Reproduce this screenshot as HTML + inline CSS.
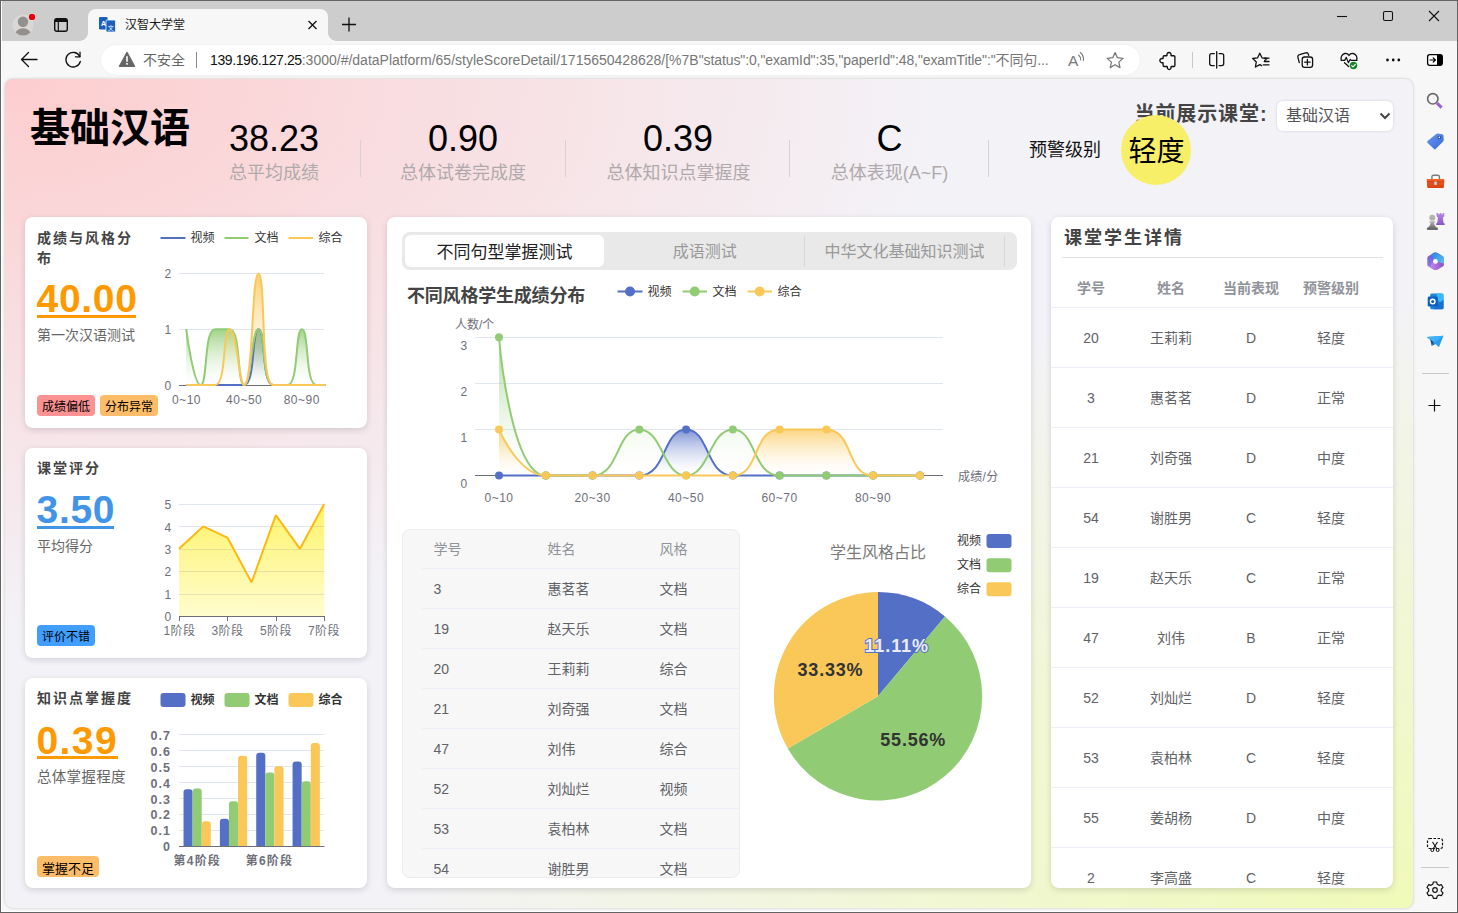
<!DOCTYPE html>
<html lang="zh-CN">
<head>
<meta charset="utf-8">
<title>汉智大学堂</title>
<style>
*{box-sizing:border-box;margin:0;padding:0}
html,body{width:1458px;height:913px;overflow:hidden;background:#f7f7f7}
body{position:relative;font-family:"Liberation Sans","Noto Sans CJK SC",sans-serif;color:#333}
.abs{position:absolute}
.t{position:absolute;white-space:nowrap;line-height:1}
.c{transform:translateX(-50%)}
#win{position:absolute;left:0;top:0;width:1458px;height:913px;border:1px solid #636363;pointer-events:none;z-index:50;box-shadow:inset 1px -1px 0 0 rgba(255,255,255,.95)}
#tabbar{position:absolute;left:1px;top:1px;width:1456px;height:40px;background:#cdcdcd}
#toolbar{position:absolute;left:1px;top:41px;width:1456px;height:38px;background:#f7f7f7}
#tab{position:absolute;left:88px;top:9px;width:240px;height:32px;background:#f7f7f7;border-radius:8px 8px 0 0}
#tab:before,#tab:after{content:"";position:absolute;bottom:0;width:8px;height:8px;background:radial-gradient(circle at 0 0,transparent 7.5px,#f7f7f7 8px)}
#tab:before{left:-8px}
#tab:after{right:-8px;background:radial-gradient(circle at 100% 0,transparent 7.5px,#f7f7f7 8px)}
#addr{position:absolute;left:101px;top:45px;width:1039px;height:30px;border-radius:15px;background:#fff;box-shadow:0 0 2px rgba(0,0,0,.08)}
#side{position:absolute;left:1413px;top:79px;width:44px;height:833px;background:#f7f7f7}
#page{position:absolute;left:5px;top:79px;width:1408px;height:829px;border-radius:8px;
 background:radial-gradient(ellipse farthest-corner at 0 0,rgba(253,205,206,1) 0%,rgba(253,205,206,0) 47%),radial-gradient(ellipse farthest-corner at 100% 100%,rgba(240,250,184,1) 0%,rgba(240,250,184,.6) 22%,rgba(240,250,184,0) 52%),#f3f2f7;box-shadow:0 0 3px rgba(0,0,0,.22)}
.card{position:absolute;background:#fff;border-radius:8px;box-shadow:0 2px 6px rgba(50,45,65,.17)}
.ttl{font-weight:bold;font-size:14px;letter-spacing:2px;color:#444}
.big{font-weight:bold;font-size:38px;letter-spacing:.9px}
.sub{font-size:14px;color:#666}
.tag{position:absolute;height:21px;border-radius:4px;font-size:12px;line-height:25px;text-align:center;color:#000;white-space:nowrap}
.ax{font-size:12px;color:#6E7079;letter-spacing:.5px}
.axb{font-size:12px;color:#6E7079;font-weight:bold;letter-spacing:1.2px}
.lg{font-size:12px;color:#333}
.num{font-size:36px;color:#000}
.lab{font-size:18px;color:#b0a9ab}
.vsep{position:absolute;top:140px;width:1px;height:37px;background:#d9d0d4}
.th{font-size:14px;color:#909399}
.td{font-size:14px;color:#606266}
.hl{position:absolute;height:1px;background:#ebeef5}
svg{position:absolute;left:0;top:0;overflow:visible}
</style>
</head>
<body>
<div id="tabbar"></div>
<div id="toolbar"></div>
<div id="tab"></div>
<div id="addr"></div>
<div id="side"></div>
<div id="page"></div>

<!-- ===== browser chrome icons & text ===== -->
<svg width="1458" height="80" viewBox="0 0 1458 80">
 <!-- profile -->
 <clipPath id="pfc"><circle cx="23" cy="25" r="10.500"/></clipPath>
 <circle cx="23" cy="25" r="10.500" fill="#dad8d6"/>
 <g clip-path="url(#pfc)">
  <ellipse cx="23" cy="35.800" rx="8.400" ry="7.600" fill="#93908e"/>
  <circle cx="23" cy="21.800" r="6.200" fill="#dad8d6"/>
  <circle cx="23" cy="21.800" r="5.200" fill="#93908e"/>
 </g>
 <circle cx="32" cy="16.900" r="3.800" fill="#e4e2e0"/>
 <circle cx="32" cy="16.900" r="3.200" fill="#e6000c"/>
 <!-- tab actions icon -->
 <rect x="54.7" y="18.7" width="12.6" height="12.6" rx="2.2" fill="none" stroke="#111" stroke-width="1.4"/>
 <path d="M54.7,22 h12.6 v-1.2 a2.2,2.2 0 0 0 -2.2,-2.2 h-8.2 a2.2,2.2 0 0 0 -2.2,2.2z" fill="#111"/>
 <line x1="58.3" y1="22" x2="58.3" y2="31" stroke="#111" stroke-width="1.2"/>
 <!-- favicon -->
 <rect x="99" y="17" width="8.600" height="12.600" rx="1.3" fill="#1b5fbd"/>
 <rect x="106" y="20" width="9.5" height="12" rx="1.2" fill="#1b5fbd" stroke="#f7f7f7" stroke-width=".8"/>
 <text x="103.5" y="25.5" font-size="7" font-weight="bold" fill="#fff" text-anchor="middle" font-family="Liberation Sans,sans-serif">A</text>
 <text x="110.8" y="29.5" font-size="6" fill="#fff" text-anchor="middle" font-family="Liberation Sans,Noto Sans CJK SC,sans-serif">文</text>
 <!-- tab close -->
 <path d="M308.5,21 l8,8 M316.5,21 l-8,8" stroke="#111" stroke-width="1.3" fill="none"/>
 <!-- new tab plus -->
 <path d="M342,24.5 h14 M349,17.5 v14" stroke="#111" stroke-width="1.3" fill="none"/>
 <!-- window controls -->
 <path d="M1337,16.5 h10" stroke="#111" stroke-width="1.1"/>
 <rect x="1383.5" y="11.500" width="9" height="9" rx="1.5" fill="none" stroke="#111" stroke-width="1.1"/>
 <path d="M1429,11 l10,10 M1439,11 l-10,10" stroke="#111" stroke-width="1.1"/>
 <!-- back -->
 <path d="M21.500,59.500 h15.500 M28.500,52.500 l-7,7 l7,7" stroke="#111" stroke-width="1.3" fill="none" stroke-linecap="round" stroke-linejoin="round"/>
 <!-- refresh -->
 <path d="M79.800,56.500 A7.300,7.300 0 1 0 80.300,61.500" stroke="#111" stroke-width="1.3" fill="none" stroke-linecap="round"/>
 <path d="M80,52.200 v4.600 h-4.600" stroke="#111" stroke-width="1.3" fill="none" stroke-linecap="round" stroke-linejoin="round"/>
 <!-- warning triangle -->
 <path d="M127,52.300 L134.600,66.300 H119.400 Z" fill="#666" stroke="#666" stroke-width="1.2" stroke-linejoin="round"/>
 <rect x="126.200" y="56.200" width="1.600" height="5.600" fill="#fff"/>
 <rect x="126.200" y="63" width="1.600" height="1.700" fill="#fff"/>
 <line x1="196.500" y1="52" x2="196.500" y2="68" stroke="#8a8a8a" stroke-width="1"/>
 <!-- read aloud A -->
 <text x="1068" y="65.500" font-size="15.500" fill="#7a7a7a" font-family="Liberation Sans,sans-serif">A</text>
 <path d="M1078.600,55 q2.300,2 2,5 M1080.400,52.500 q3.600,3.200 3,8" stroke="#7a7a7a" stroke-width="1.100" fill="none" stroke-linecap="round"/>
 <!-- star -->
 <path d="M1115.10,52.60 L1117.39,57.74 L1122.99,58.34 L1118.81,62.11 L1119.98,67.61 L1115.10,64.80 L1110.22,67.61 L1111.39,62.11 L1107.21,58.34 L1112.81,57.74Z" fill="none" stroke="#767676" stroke-width="1.250" stroke-linejoin="round"/>
 <!-- extension puzzle -->
 <path d="M1164.300,55.700 h2.300 c.3,0 .5,-.2 .4,-.5 a2.100,2.100 0 1 1 4,0 c-.1,.3 .1,.5 .4,.5 h2.300 a1.200,1.200 0 0 1 1.200,1.200 v8.400 a1.200,1.200 0 0 1 -1.200,1.200 h-2.300 c-.3,0 -.5,.2 -.4,.5 a1.900,1.900 0 1 1 -3.600,0 c.1,-.3 -.1,-.5 -.4,-.5 h-2.700 a1.200,1.200 0 0 1 -1.200,-1.200 v-2.300 c0,-.3 -.2,-.5 -.5,-.4 a2.100,2.100 0 1 1 0,-4 c.3,.1 .5,-.1 .5,-.4 v-1.300 a1.200,1.200 0 0 1 1.200,-1.200z" fill="none" stroke="#111" stroke-width="1.350" stroke-linejoin="round"/>
 <line x1="1192.500" y1="52" x2="1192.500" y2="68" stroke="#c8c8c8" stroke-width="1"/>
 <!-- split screen -->
 <path d="M1214.300,53.600 h-2.600 a2,2 0 0 0 -2,2 v8 a2,2 0 0 0 2,2 h2.600 M1219.100,53.600 h2.600 a2,2 0 0 1 2,2 v8 a2,2 0 0 1 -2,2 h-2.600 M1216.700,51.700 v16.300" fill="none" stroke="#111" stroke-width="1.300" stroke-linecap="round"/>
 <!-- favorites -->
 <path d="M1259.800,53.300 l2.200,4.500 4.900,.7 -2.300,2.200 M1259.800,53.300 l-2.200,4.500 -4.900,.7 3.600,3.500 -.9,5 4.400,-2.300 1.800,.9" fill="none" stroke="#111" stroke-width="1.300" stroke-linejoin="round" stroke-linecap="round"/>
 <path d="M1264.300,58.200 h4.700 M1264.300,61.500 h4.700 M1263.300,64.800 h5.700" stroke="#111" stroke-width="1.300" stroke-linecap="round"/>
 <!-- collections -->
 <path d="M1299.300,62.600 l-1.400,-5.300 a2.200,2.200 0 0 1 1.600,-2.700 l6.200,-1.700 a2.200,2.200 0 0 1 2.700,1.500 l.3,1" fill="none" stroke="#111" stroke-width="1.300" stroke-linecap="round"/>
 <rect x="1302.200" y="57" width="10.400" height="10.300" rx="2.300" fill="none" stroke="#111" stroke-width="1.300"/>
 <path d="M1307.400,59.500 v5.400 M1304.700,62.200 h5.400" stroke="#111" stroke-width="1.300" stroke-linecap="round"/>
 <!-- browser essentials heart -->
 <path d="M1341.300,60.400 c-.9,-3 .5,-6.300 3.600,-6.900 c1.700,-.3 3.200,.5 4.100,1.900 c.9,-1.400 2.400,-2.200 4.100,-1.900 c3.100,.6 4.500,3.900 3.600,6.900" fill="none" stroke="#111" stroke-width="1.300" stroke-linecap="round"/>
 <path d="M1341.300,60.400 h3.400 l1.600,-3 2.100,5.300 1.700,-3.300 .9,1 h5.800" fill="none" stroke="#111" stroke-width="1.200" stroke-linejoin="round" stroke-linecap="round"/>
 <path d="M1344.500,62.700 l4.200,3.900" stroke="#111" stroke-width="1.300" stroke-linecap="round"/>
 <circle cx="1353.500" cy="65.500" r="3.700" fill="#13871f"/>
 <path d="M1351.700,65.600 l1.300,1.300 2.400,-2.600" fill="none" stroke="#fff" stroke-width="1.100" stroke-linecap="round" stroke-linejoin="round"/>
 <!-- more -->
 <circle cx="1387.500" cy="60" r="1.400" fill="#111"/><circle cx="1393.200" cy="60" r="1.400" fill="#111"/><circle cx="1398.800" cy="60" r="1.400" fill="#111"/>
 <!-- sidebar toggle -->
 <rect x="1427.600" y="54.700" width="14.700" height="10.600" rx="2.200" fill="#fff" stroke="#000" stroke-width="1.300"/>
 <path d="M1437,54.700 h3.100 a2.200,2.200 0 0 1 2.200,2.200 v6.200 a2.200,2.200 0 0 1 -2.200,2.200 h-3.100z" fill="#000"/>
 <path d="M1430,60 h5.200 M1433.200,57.800 l2.200,2.200 -2.200,2.200" stroke="#000" stroke-width="1.200" fill="none" stroke-linecap="round" stroke-linejoin="round"/>
</svg>
<div class="t" style="left:125px;top:19px;font-size:12px;color:#1a1a1a">汉智大学堂</div>
<div class="t" style="left:143px;top:53px;font-size:14px;color:#666">不安全</div>
<div class="t" id="url" style="left:210px;top:53px;font-size:14px;color:#777;letter-spacing:-.1px"><span style="color:#111;letter-spacing:-.4px">139.196.127.25</span><span style="letter-spacing:0">:3000/#/dataPlatform/65/styleScoreDetail/1715650428628/[%7B</span>"status":0,"examId":35,"paperId":48,"examTitle":"不同句...</div>

<!-- ===== right sidebar icons ===== -->
<svg width="1458" height="913" viewBox="0 0 1458 913">
 <circle cx="1432.800" cy="98.800" r="5.200" fill="none" stroke="#6b6b6b" stroke-width="1.700"/>
 <path d="M1437,103.200 l4.600,4.400" stroke="#9b5fd6" stroke-width="3" stroke-linecap="butt"/>
 <!-- tag -->
 <defs>
  <linearGradient id="tagg" x1="0" y1="0" x2="1" y2="1"><stop offset="0" stop-color="#6a9af2"/><stop offset="1" stop-color="#3568d4"/></linearGradient>
  <linearGradient id="tbx" x1="0" y1="0" x2="0" y2="1"><stop offset="0" stop-color="#f0642a"/><stop offset="1" stop-color="#d9400f"/></linearGradient>
  <linearGradient id="rook" x1="0" y1="0" x2="0" y2="1"><stop offset="0" stop-color="#b48ae6"/><stop offset="1" stop-color="#8a55c8"/></linearGradient>
  <linearGradient id="pawn" x1="0" y1="0" x2="0" y2="1"><stop offset="0" stop-color="#b5b5b5"/><stop offset="1" stop-color="#6f6f6f"/></linearGradient>
  <linearGradient id="m1" x1="0" y1="0" x2="1" y2="1"><stop offset="0" stop-color="#2f7fe0"/><stop offset="1" stop-color="#55c6f2"/></linearGradient>
  <linearGradient id="m2" x1="0" y1="0" x2="0" y2="1"><stop offset="0" stop-color="#5a62dc"/><stop offset="1" stop-color="#a07ce8"/></linearGradient>
  <linearGradient id="m3" x1="0" y1="0" x2="1" y2="0"><stop offset="0" stop-color="#c487ea"/><stop offset="1" stop-color="#8e4fc4"/></linearGradient>
 </defs>
 <path d="M1427.600,140.900 l8.600,-7 a2,2 0 0 1 1.600,-.45 l4.400,.75 a1.600,1.600 0 0 1 1.300,1.500 l.2,4.200 a2,2 0 0 1 -.6,1.500 l-7.200,7.300 a1.500,1.500 0 0 1 -2.100,0 l-6.100,-5.700 a1.400,1.400 0 0 1 -.1,-2.100z" fill="url(#tagg)"/>
 <circle cx="1439.300" cy="137.400" r="1.700" fill="#2b3f78"/><circle cx="1439.300" cy="137.400" r=".8" fill="#fff"/>
 <!-- toolbox -->
 <path d="M1431.900,179 v-2.200 a1.600,1.600 0 0 1 1.600,-1.600 h4.300 a1.600,1.600 0 0 1 1.600,1.600 v2.200" fill="none" stroke="#7d7d7d" stroke-width="1.400"/>
 <path d="M1427.600,178.900 h15.900 a.9,.9 0 0 1 .9,1 l-.5,7 a1.200,1.200 0 0 1 -1.200,1.100 h-14.300 a1.200,1.200 0 0 1 -1.200,-1.100 l-.5,-7 a.9,.9 0 0 1 .9,-1z" fill="url(#tbx)"/>
 <rect x="1427" y="181.300" width="17.200" height="1.100" fill="#c5370c" opacity=".7"/>
 <rect x="1434.200" y="181.500" width="2.700" height="3.500" rx=".8" fill="#b9d3e6"/>
 <!-- chess -->
 <path d="M1436.600,213 h1.700 v1.300 h1.400 v-1.300 h1.700 v1.300 h1.300 v-1.300 h1.600 v3.200 l-1.400,1.300 .5,5 1.300,1.300 v1.300 h-8.600 v-1.300 l1.300,-1.300 .5,-5 -1.300,-1.300z" fill="url(#rook)"/>
 <circle cx="1432.300" cy="217.800" r="3" fill="#b2b2b2"/>
 <path d="M1429.300,221.300 h6 v1.300 h-1.300 c.2,2.200 .9,3.600 2.400,4.700 v.6 h-8.200 v-.6 c1.500,-1.100 2.200,-2.500 2.400,-4.700 h-1.300z" fill="url(#pawn)"/>
 <rect x="1426.800" y="227.600" width="11.200" height="2.400" rx="1.100" fill="#6a6a6a"/>
 <!-- m365 -->
 <clipPath id="hexc"><path d="M1435.500,253.400 L1442.400,257.400 V265.200 L1435.500,269.200 L1428.600,265.200 V257.400Z" stroke="#000" stroke-width="1.600" stroke-linejoin="round"/></clipPath>
 <g>
  <path d="M1435.500,252.600 c.7,0 1.400,.2 2,.5 l4.900,2.900 c.8,.5 1.300,1.300 1.300,2.200 v6.200 c0,.9 -.5,1.700 -1.300,2.200 l-4.900,2.900 c-1.200,.7 -2.800,.7 -4,0 l-4.900,-2.900 c-.8,-.5 -1.300,-1.300 -1.300,-2.200 v-6.200 c0,-.9 .5,-1.700 1.300,-2.200 l4.900,-2.900 c.6,-.3 1.300,-.5 2,-.5z" fill="url(#m2)"/>
  <path d="M1433.200,252.900 c.7,-.3 1.500,-.4 2.300,-.3 c.7,0 1.400,.2 2,.5 l4.900,2.900 c.8,.5 1.300,1.300 1.300,2.200 v5.300 l-8.300,-2.100 -3.700,-6.500z" fill="url(#m1)"/>
  <path d="M1430.200,267.400 l1.200,-4 4,-2 8.300,2.100 v.9 c0,.9 -.5,1.700 -1.300,2.200 l-4.900,2.900 c-1.200,.7 -2.800,.7 -4,0z" fill="url(#m3)"/>
 </g>
 <circle cx="1435.400" cy="261.400" r="2.400" fill="#fff"/>
 <!-- outlook -->
 <rect x="1430.200" y="293.600" width="13.300" height="15.700" rx="1.500" fill="#1b86dc"/>
 <path d="M1436.800,293.600 h5.200 a1.500,1.500 0 0 1 1.500,1.500 v5 l-3.300,2.200 -3.400,-2.200z" fill="#3cb8f2"/>
 <path d="M1443.500,300.100 v7.700 a1.500,1.500 0 0 1 -1.500,1.500 h-9 l7.200,-7z" fill="#1a6fd0"/>
 <rect x="1427.700" y="296.600" width="10.200" height="10" rx="1.300" fill="#0f5fc0"/>
 <circle cx="1432.700" cy="301.500" r="2.300" fill="none" stroke="#fff" stroke-width="1.400"/>
 <!-- paper plane -->
 <path d="M1426.600,337 l16.900,-1.200 -4.600,11.400 -4.900,-4.800z" fill="#2a9df0"/>
 <path d="M1426.600,337 l16.900,-1.200 -9.500,6.600z" fill="#3eb2f5"/>
 <path d="M1430.200,339.200 l1.500,6.800 2.300,-3.600 z" fill="#0e4f8e"/>
 <path d="M1434,342.400 l-2.300,3.600 3.900,-2z" fill="#1570c0"/>
 <line x1="1422" y1="373.500" x2="1449" y2="373.500" stroke="#c9c9c9" stroke-width="1"/>
 <path d="M1428.500,405.500 h12 M1434.500,399.500 v12" stroke="#111" stroke-width="1.200"/>
 <!-- screenshot -->
 <rect x="1427.500" y="838.500" width="15" height="10" rx="2" fill="none" stroke="#111" stroke-width="1.200" stroke-dasharray="2.500 1.500"/>
 <path d="M1432.500,842 l4.500,7 M1437.500,842 l-4.500,7" stroke="#111" stroke-width="1.100"/>
 <circle cx="1432.300" cy="850" r="1.500" fill="#f7f7f7" stroke="#111" stroke-width="1"/><circle cx="1437.700" cy="850" r="1.500" fill="#f7f7f7" stroke="#111" stroke-width="1"/>
 <line x1="1421" y1="867.500" x2="1449" y2="867.500" stroke="#c9c9c9" stroke-width="1"/>
 <!-- gear -->
 <g transform="translate(1435 890)" fill="none" stroke="#111" stroke-width="1.200" stroke-linejoin="round">
  <path d="M-1.600,-8 h3.200 l.7,2.300 1.800,1 2.300,-.6 1.600,2.800 -1.700,1.700 v2 l1.700,1.700 -1.600,2.800 -2.300,-.6 -1.800,1 -.7,2.300 h-3.200 l-.7,-2.300 -1.800,-1 -2.300,.6 -1.600,-2.800 1.700,-1.700 v-2 l-1.700,-1.700 1.600,-2.800 2.300,.6 1.800,-1z"/>
  <circle cx="0" cy="0" r="2.300"/>
 </g>
</svg>

<!-- ===== header ===== -->
<div class="t" style="left:30px;top:108px;font-size:40px;font-weight:bold;color:#000">基础汉语</div>
<div class="t num c" style="left:274px;top:121px">38.23</div>
<div class="t lab c" style="left:274px;top:164px">总平均成绩</div>
<div class="vsep" style="left:360px"></div>
<div class="t num c" style="left:463px;top:121px">0.90</div>
<div class="t lab c" style="left:463px;top:164px">总体试卷完成度</div>
<div class="vsep" style="left:565px"></div>
<div class="t num c" style="left:678px;top:121px">0.39</div>
<div class="t lab c" style="left:678.500px;top:164px">总体知识点掌握度</div>
<div class="vsep" style="left:789px"></div>
<div class="t num c" style="left:889.500px;top:121px">C</div>
<div class="t lab c" style="left:889.500px;top:164px">总体表现(A~F)</div>
<div class="vsep" style="left:988px"></div>
<div class="t" style="left:1029px;top:141px;font-size:18px;color:#111">预警级别</div>
<div class="t" style="left:1134.500px;top:104px;font-size:20px;font-weight:bold;color:#444;letter-spacing:.9px">当前展示课堂:</div>
<div class="abs" style="left:1121px;top:114.500px;width:70px;height:70px;border-radius:50%;background:#f8ef68"></div>
<div class="t" style="left:1128.500px;top:138px;font-size:28px;color:#000">轻度</div>
<div class="abs" style="left:1277px;top:101px;width:116px;height:30px;border-radius:6px;background:#fff;box-shadow:0 0 3px rgba(80,60,90,.18)"></div>
<div class="t" style="left:1286px;top:108px;font-size:16px;color:#555">基础汉语</div>
<svg width="1458" height="913"><path d="M1380.500,113.500 l4.500,4.500 4.500,-4.500" fill="none" stroke="#444" stroke-width="2" stroke-linejoin="miter"/></svg>

<!-- ===== cards ===== -->
<div class="card" style="left:25px;top:217px;width:342px;height:211px"></div>
<div class="card" style="left:25px;top:448px;width:342px;height:210px"></div>
<div class="card" style="left:25px;top:678px;width:342px;height:210px"></div>
<div class="card" style="left:387px;top:217px;width:644px;height:671px"></div>
<div class="card" style="left:1051px;top:217px;width:342px;height:671px;overflow:hidden" id="rc"></div>

<!-- card 1 -->
<div class="t ttl" style="left:37px;top:228px;line-height:20px;white-space:normal;width:100px">成绩与风格分布</div>
<div class="t big" style="left:36.500px;top:279px;color:#ff9900;letter-spacing:.700px;font-size:39px">40.00</div>
<div class="abs" style="left:37px;top:315px;width:99px;height:3px;background:#ff9900"></div>
<div class="t sub" style="left:37px;top:328px">第一次汉语测试</div>
<div class="tag" style="left:37px;top:395px;width:58px;background:#fc9292">成绩偏低</div>
<div class="tag" style="left:100px;top:395px;width:58px;background:#fdbc68">分布异常</div>
<svg width="1458" height="913">
 <line x1="160.500" x2="185.500" y1="238" y2="238" stroke="#5470c6" stroke-width="2"/>
 <line x1="224.500" x2="248.500" y1="238" y2="238" stroke="#91cc75" stroke-width="2"/>
 <line x1="288.500" x2="313" y1="238" y2="238" stroke="#fac858" stroke-width="2"/>
<defs>
<linearGradient id="c1b" x1="0" y1="0" x2="0" y2="1"><stop offset="0.00" stop-color="#5470c6" stop-opacity="0.850"/><stop offset="0.15" stop-color="#5470c6" stop-opacity="0.645"/><stop offset="0.30" stop-color="#5470c6" stop-opacity="0.464"/><stop offset="0.45" stop-color="#5470c6" stop-opacity="0.308"/><stop offset="0.60" stop-color="#5470c6" stop-opacity="0.179"/><stop offset="0.75" stop-color="#5470c6" stop-opacity="0.081"/><stop offset="0.90" stop-color="#5470c6" stop-opacity="0.017"/><stop offset="1.00" stop-color="#5470c6" stop-opacity="0.000"/></linearGradient>
<linearGradient id="c1g" x1="0" y1="0" x2="0" y2="1"><stop offset="0.00" stop-color="#91cc75" stop-opacity="0.850"/><stop offset="0.15" stop-color="#91cc75" stop-opacity="0.645"/><stop offset="0.30" stop-color="#91cc75" stop-opacity="0.464"/><stop offset="0.45" stop-color="#91cc75" stop-opacity="0.308"/><stop offset="0.60" stop-color="#91cc75" stop-opacity="0.179"/><stop offset="0.75" stop-color="#91cc75" stop-opacity="0.081"/><stop offset="0.90" stop-color="#91cc75" stop-opacity="0.017"/><stop offset="1.00" stop-color="#91cc75" stop-opacity="0.000"/></linearGradient>
<linearGradient id="c1y" x1="0" y1="0" x2="0" y2="1"><stop offset="0.00" stop-color="#fac858" stop-opacity="0.850"/><stop offset="0.15" stop-color="#fac858" stop-opacity="0.645"/><stop offset="0.30" stop-color="#fac858" stop-opacity="0.464"/><stop offset="0.45" stop-color="#fac858" stop-opacity="0.308"/><stop offset="0.60" stop-color="#fac858" stop-opacity="0.179"/><stop offset="0.75" stop-color="#fac858" stop-opacity="0.081"/><stop offset="0.90" stop-color="#fac858" stop-opacity="0.017"/><stop offset="1.00" stop-color="#fac858" stop-opacity="0.000"/></linearGradient>
<clipPath id="c1clip"><rect x="178" y="265" width="147.6" height="125"/></clipPath></defs>
<line x1="179" x2="324" y1="329.5" y2="329.5" stroke="#E0E6F1" stroke-width="1"/>
<line x1="179" x2="324" y1="273.5" y2="273.5" stroke="#E0E6F1" stroke-width="1"/>
<line x1="179" x2="324" y1="385.5" y2="385.5" stroke="#6E7079" stroke-width="1"/>
<g clip-path="url(#c1clip)">
<path d="M186.20,385.00 C186.20,385.00 193.44,385.00 200.67,385.00 C207.90,385.00 207.90,385.00 215.14,385.00 C222.38,385.00 222.38,385.00 229.61,385.00 C236.84,385.00 241.18,385.00 244.08,385.00 C255.65,385.00 251.31,329.20 258.55,329.20 C265.79,329.20 261.45,385.00 273.02,385.00 C275.92,385.00 280.25,385.00 287.49,385.00 C294.73,385.00 294.73,385.00 301.96,385.00 C309.19,385.00 309.20,385.00 316.43,385.00 C323.66,385.00 330.90,385.00 330.90,385.00 L330.90,385.00 L186.20,385.00 Z" fill="url(#c1b)"/>
<path d="M186.20,329.20 C186.20,329.20 193.44,385.00 200.67,385.00 C207.90,385.00 203.57,329.20 215.14,329.20 C218.04,329.20 226.71,329.20 229.61,329.20 C241.18,329.20 236.84,385.00 244.08,385.00 C251.31,385.00 251.31,329.20 258.55,329.20 C265.79,329.20 261.45,385.00 273.02,385.00 C275.92,385.00 284.59,385.00 287.49,385.00 C299.06,385.00 294.72,329.20 301.96,329.20 C309.19,329.20 304.86,385.00 316.43,385.00 C319.33,385.00 330.90,385.00 330.90,385.00 L330.90,385.00 L186.20,385.00 Z" fill="url(#c1g)"/>
<path d="M186.20,385.00 C186.20,385.00 193.44,385.00 200.67,385.00 C207.90,385.00 212.24,385.00 215.14,385.00 C226.71,385.00 222.38,329.20 229.61,329.20 C236.84,329.20 239.18,385.00 244.08,385.00 C253.65,385.00 251.31,273.40 258.55,273.40 C265.79,273.40 260.20,385.00 273.02,385.00 C274.67,385.00 280.25,385.00 287.49,385.00 C294.73,385.00 294.73,385.00 301.96,385.00 C309.19,385.00 309.20,385.00 316.43,385.00 C323.66,385.00 330.90,385.00 330.90,385.00 L330.90,385.00 L186.20,385.00 Z" fill="url(#c1y)"/>
<path d="M186.20,385.00 C186.20,385.00 193.44,385.00 200.67,385.00 C207.90,385.00 207.90,385.00 215.14,385.00 C222.38,385.00 222.38,385.00 229.61,385.00 C236.84,385.00 241.18,385.00 244.08,385.00 C255.65,385.00 251.31,329.20 258.55,329.20 C265.79,329.20 261.45,385.00 273.02,385.00 C275.92,385.00 280.25,385.00 287.49,385.00 C294.73,385.00 294.73,385.00 301.96,385.00 C309.19,385.00 309.20,385.00 316.43,385.00 C323.66,385.00 330.90,385.00 330.90,385.00" fill="none" stroke="#5470c6" stroke-width="2" stroke-linejoin="bevel"/>
<path d="M186.20,329.20 C186.20,329.20 193.44,385.00 200.67,385.00 C207.90,385.00 203.57,329.20 215.14,329.20 C218.04,329.20 226.71,329.20 229.61,329.20 C241.18,329.20 236.84,385.00 244.08,385.00 C251.31,385.00 251.31,329.20 258.55,329.20 C265.79,329.20 261.45,385.00 273.02,385.00 C275.92,385.00 284.59,385.00 287.49,385.00 C299.06,385.00 294.72,329.20 301.96,329.20 C309.19,329.20 304.86,385.00 316.43,385.00 C319.33,385.00 330.90,385.00 330.90,385.00" fill="none" stroke="#91cc75" stroke-width="2" stroke-linejoin="bevel"/>
<path d="M186.20,385.00 C186.20,385.00 193.44,385.00 200.67,385.00 C207.90,385.00 212.24,385.00 215.14,385.00 C226.71,385.00 222.38,329.20 229.61,329.20 C236.84,329.20 239.18,385.00 244.08,385.00 C253.65,385.00 251.31,273.40 258.55,273.40 C265.79,273.40 260.20,385.00 273.02,385.00 C274.67,385.00 280.25,385.00 287.49,385.00 C294.73,385.00 294.73,385.00 301.96,385.00 C309.19,385.00 309.20,385.00 316.43,385.00 C323.66,385.00 330.90,385.00 330.90,385.00" fill="none" stroke="#fac858" stroke-width="2" stroke-linejoin="bevel"/>
</g>
</svg>
<div class="t lg" style="left:190.500px;top:232px">视频</div>
<div class="t lg" style="left:254.500px;top:232px">文档</div>
<div class="t lg" style="left:318.500px;top:232px">综合</div>
<div class="t ax c" style="left:168px;top:268px">2</div>
<div class="t ax c" style="left:168px;top:323.500px">1</div>
<div class="t ax c" style="left:168px;top:379.500px">0</div>
<div class="t ax c" style="left:186.500px;top:394px">0~10</div>
<div class="t ax c" style="left:244.200px;top:394px">40~50</div>
<div class="t ax c" style="left:301.800px;top:394px">80~90</div>

<!-- card 2 -->
<div class="t ttl" style="left:37px;top:461px">课堂评分</div>
<div class="t big" style="left:36.500px;top:490px;color:#4295e6;letter-spacing:.700px;font-size:39px">3.50</div>
<div class="abs" style="left:37px;top:526px;width:77px;height:3px;background:#4295e6"></div>
<div class="t sub" style="left:37px;top:539px">平均得分</div>
<div class="tag" style="left:37px;top:625px;width:58px;background:#409eff">评价不错</div>
<svg width="1458" height="913">
<defs><linearGradient id="c2g" x1="0" y1="504" x2="0" y2="616" gradientUnits="userSpaceOnUse"><stop offset="0" stop-color="#ffee2a"/><stop offset="1" stop-color="#fffbb8"/></linearGradient></defs>
<line x1="179" x2="324.5" y1="594.5" y2="594.5" stroke="#E0E6F1" stroke-width="1"/>
<line x1="179" x2="324.5" y1="571.5" y2="571.5" stroke="#E0E6F1" stroke-width="1"/>
<line x1="179" x2="324.5" y1="549.5" y2="549.5" stroke="#E0E6F1" stroke-width="1"/>
<line x1="179" x2="324.5" y1="526.5" y2="526.5" stroke="#E0E6F1" stroke-width="1"/>
<line x1="179" x2="324.5" y1="504.5" y2="504.5" stroke="#E0E6F1" stroke-width="1"/>
<path d="M179.00,548.80 L203.20,526.40 L227.40,537.60 L251.60,582.40 L275.80,515.20 L300.00,548.80 L324.20,504.00 L324.20,616.00 L179.00,616.00 Z" fill="url(#c2g)" fill-opacity="0.7"/>
<clipPath id="c2clip"><path d="M179.00,548.80 L203.20,526.40 L227.40,537.60 L251.60,582.40 L275.80,515.20 L300.00,548.80 L324.20,504.00 L324.20,616.00 L179.00,616.00 Z"/></clipPath><g clip-path="url(#c2clip)">
<line x1="179" x2="324.5" y1="594.5" y2="594.5" stroke="#8f98a8" stroke-opacity=".16" stroke-width="1"/>
<line x1="179" x2="324.5" y1="571.5" y2="571.5" stroke="#8f98a8" stroke-opacity=".16" stroke-width="1"/>
<line x1="179" x2="324.5" y1="549.5" y2="549.5" stroke="#8f98a8" stroke-opacity=".16" stroke-width="1"/>
<line x1="179" x2="324.5" y1="526.5" y2="526.5" stroke="#8f98a8" stroke-opacity=".16" stroke-width="1"/>
</g>
<line x1="179" x2="324.5" y1="616.5" y2="616.5" stroke="#6E7079" stroke-width="1"/>
<line x1="179.5" x2="179.5" y1="616" y2="621" stroke="#6E7079" stroke-width="1"/>
<line x1="227.5" x2="227.5" y1="616" y2="621" stroke="#6E7079" stroke-width="1"/>
<line x1="276.5" x2="276.5" y1="616" y2="621" stroke="#6E7079" stroke-width="1"/>
<line x1="324.5" x2="324.5" y1="616" y2="621" stroke="#6E7079" stroke-width="1"/>
<path d="M179.00,548.80 L203.20,526.40 L227.40,537.60 L251.60,582.40 L275.80,515.20 L300.00,548.80 L324.20,504.00" fill="none" stroke="#fdb913" stroke-width="2" stroke-linejoin="bevel"/>
</svg>
<div class="t ax c" style="left:168px;top:499px">5</div>
<div class="t ax c" style="left:168px;top:521.500px">4</div>
<div class="t ax c" style="left:168px;top:544px">3</div>
<div class="t ax c" style="left:168px;top:566px">2</div>
<div class="t ax c" style="left:168px;top:588.500px">1</div>
<div class="t ax c" style="left:168px;top:611px">0</div>
<div class="t ax c" style="left:179.500px;top:625px">1阶段</div>
<div class="t ax c" style="left:227.500px;top:625px">3阶段</div>
<div class="t ax c" style="left:276px;top:625px">5阶段</div>
<div class="t ax c" style="left:324px;top:625px">7阶段</div>

<!-- card 3 -->
<div class="t ttl" style="left:37px;top:691px">知识点掌握度</div>
<div class="t big" style="left:36.500px;top:721px;color:#ff9900;letter-spacing:1.400px;font-size:39px">0.39</div>
<div class="abs" style="left:37px;top:756px;width:81px;height:3px;background:#ff9900"></div>
<div class="t sub" style="left:37px;top:769.500px;font-size:14.500px;letter-spacing:.3px">总体掌握程度</div>
<div class="tag" style="left:37px;top:855.500px;width:62px;background:#fdbc68;font-size:13px">掌握不足</div>
<svg width="1458" height="913">
 <rect x="160.500" y="693" width="25" height="14" rx="3" fill="#5470c6"/>
 <rect x="224.500" y="693" width="25" height="14" rx="3" fill="#91cc75"/>
 <rect x="288.500" y="693" width="25" height="14" rx="3" fill="#fac858"/>
<line x1="179" x2="324.5" y1="830.5" y2="830.5" stroke="#E0E6F1" stroke-width="1"/>
<line x1="179" x2="324.5" y1="814.5" y2="814.5" stroke="#E0E6F1" stroke-width="1"/>
<line x1="179" x2="324.5" y1="798.5" y2="798.5" stroke="#E0E6F1" stroke-width="1"/>
<line x1="179" x2="324.5" y1="782.5" y2="782.5" stroke="#E0E6F1" stroke-width="1"/>
<line x1="179" x2="324.5" y1="766.5" y2="766.5" stroke="#E0E6F1" stroke-width="1"/>
<line x1="179" x2="324.5" y1="750.5" y2="750.5" stroke="#E0E6F1" stroke-width="1"/>
<line x1="179" x2="324.5" y1="734.5" y2="734.5" stroke="#E0E6F1" stroke-width="1"/>
<path d="M183.53,846.00 L183.53,792.34 Q183.53,789.34 186.53,789.34 L189.62,789.34 Q192.62,789.34 192.62,792.34 L192.62,846.00 Z" fill="#5470c6"/>
<path d="M192.62,846.00 L192.62,791.54 Q192.62,788.54 195.62,788.54 L198.72,788.54 Q201.72,788.54 201.72,791.54 L201.72,846.00 Z" fill="#91cc75"/>
<path d="M201.72,846.00 L201.72,824.26 Q201.72,821.26 204.72,821.26 L207.82,821.26 Q210.82,821.26 210.82,824.26 L210.82,846.00 Z" fill="#fac858"/>
<path d="M219.88,846.00 L219.88,821.87 Q219.88,818.87 222.88,818.87 L225.97,818.87 Q228.97,818.87 228.97,821.87 L228.97,846.00 Z" fill="#5470c6"/>
<path d="M228.97,846.00 L228.97,804.31 Q228.97,801.31 231.97,801.31 L235.07,801.31 Q238.07,801.31 238.07,804.31 L238.07,846.00 Z" fill="#91cc75"/>
<path d="M238.07,846.00 L238.07,758.83 Q238.07,755.83 241.07,755.83 L244.17,755.83 Q247.17,755.83 247.17,758.83 L247.17,846.00 Z" fill="#fac858"/>
<path d="M256.22,846.00 L256.22,755.63 Q256.22,752.63 259.22,752.63 L262.32,752.63 Q265.32,752.63 265.32,755.63 L265.32,846.00 Z" fill="#5470c6"/>
<path d="M265.32,846.00 L265.32,775.58 Q265.32,772.58 268.32,772.58 L271.43,772.58 Q274.43,772.58 274.43,775.58 L274.43,846.00 Z" fill="#91cc75"/>
<path d="M274.42,846.00 L274.42,769.20 Q274.42,766.20 277.42,766.20 L280.52,766.20 Q283.52,766.20 283.52,769.20 L283.52,846.00 Z" fill="#fac858"/>
<path d="M292.57,846.00 L292.57,764.41 Q292.57,761.41 295.57,761.41 L298.68,761.41 Q301.68,761.41 301.68,764.41 L301.68,846.00 Z" fill="#5470c6"/>
<path d="M301.68,846.00 L301.68,784.36 Q301.68,781.36 304.68,781.36 L307.78,781.36 Q310.78,781.36 310.78,784.36 L310.78,846.00 Z" fill="#91cc75"/>
<path d="M310.77,846.00 L310.77,746.06 Q310.77,743.06 313.77,743.06 L316.88,743.06 Q319.88,743.06 319.88,746.06 L319.88,846.00 Z" fill="#fac858"/>
<line x1="179" x2="324.5" y1="846.5" y2="846.5" stroke="#6E7079" stroke-width="1"/>
</svg>
<div class="t lg" style="left:190.500px;top:694px;font-weight:bold">视频</div>
<div class="t lg" style="left:254.500px;top:694px;font-weight:bold">文档</div>
<div class="t lg" style="left:318.500px;top:694px;font-weight:bold">综合</div>
<div class="t axb" style="font-size:12.500px;letter-spacing:1px;right:1287px;top:729.500px">0.7</div>
<div class="t axb" style="font-size:12.500px;letter-spacing:1px;right:1287px;top:745.500px">0.6</div>
<div class="t axb" style="font-size:12.500px;letter-spacing:1px;right:1287px;top:761.500px">0.5</div>
<div class="t axb" style="font-size:12.500px;letter-spacing:1px;right:1287px;top:777.500px">0.4</div>
<div class="t axb" style="font-size:12.500px;letter-spacing:1px;right:1287px;top:793.500px">0.3</div>
<div class="t axb" style="font-size:12.500px;letter-spacing:1px;right:1287px;top:809px">0.2</div>
<div class="t axb" style="font-size:12.500px;letter-spacing:1px;right:1287px;top:825px">0.1</div>
<div class="t axb" style="font-size:12.500px;letter-spacing:1px;right:1287px;top:841px">0</div>
<div class="t axb c" style="left:197.300px;top:855px">第4阶段</div>
<div class="t axb c" style="left:269.500px;top:855px">第6阶段</div>

<!-- middle card -->
<div class="abs" style="left:401.500px;top:232px;width:615px;height:38px;border-radius:8px;background:#e9e9e9"></div>
<div class="abs" style="left:404.500px;top:235px;width:199px;height:32px;border-radius:6px;background:#fff"></div>
<div class="abs" style="left:803.500px;top:235.500px;width:1px;height:31px;background:#d6d6e0"></div>
<div class="abs" style="left:1003.500px;top:235.500px;width:1px;height:31px;background:#d6d6e0"></div>
<div class="t c" style="left:504.500px;top:244px;font-size:17px;color:#222">不同句型掌握测试</div>
<div class="t c" style="left:704.700px;top:244px;font-size:16px;color:#999">成语测试</div>
<div class="t c" style="left:904.600px;top:244px;font-size:16px;color:#999">中华文化基础知识测试</div>
<div class="t" style="left:407px;top:286.500px;font-size:18px;font-weight:bold;color:#444;letter-spacing:-.2px">不同风格学生成绩分布</div>
<svg width="1458" height="913">
 <line x1="617.500" x2="642.500" y1="291.500" y2="291.500" stroke="#5470c6" stroke-width="2"/><circle cx="630" cy="291.500" r="5" fill="#5470c6"/>
 <line x1="682.500" x2="707" y1="291.500" y2="291.500" stroke="#91cc75" stroke-width="2"/><circle cx="694.700" cy="291.500" r="5" fill="#91cc75"/>
 <line x1="747.500" x2="772" y1="291.500" y2="291.500" stroke="#fac858" stroke-width="2"/><circle cx="759.700" cy="291.500" r="5" fill="#fac858"/>
<defs>
<linearGradient id="cbb" x1="0" y1="0" x2="0" y2="1"><stop offset="0.00" stop-color="#5470c6" stop-opacity="0.750"/><stop offset="0.15" stop-color="#5470c6" stop-opacity="0.569"/><stop offset="0.30" stop-color="#5470c6" stop-opacity="0.409"/><stop offset="0.45" stop-color="#5470c6" stop-opacity="0.271"/><stop offset="0.60" stop-color="#5470c6" stop-opacity="0.158"/><stop offset="0.75" stop-color="#5470c6" stop-opacity="0.071"/><stop offset="0.90" stop-color="#5470c6" stop-opacity="0.015"/><stop offset="1.00" stop-color="#5470c6" stop-opacity="0.000"/></linearGradient>
<linearGradient id="cbg" x1="0" y1="0" x2="0" y2="1"><stop offset="0.00" stop-color="#91cc75" stop-opacity="0.750"/><stop offset="0.15" stop-color="#91cc75" stop-opacity="0.569"/><stop offset="0.30" stop-color="#91cc75" stop-opacity="0.409"/><stop offset="0.45" stop-color="#91cc75" stop-opacity="0.271"/><stop offset="0.60" stop-color="#91cc75" stop-opacity="0.158"/><stop offset="0.75" stop-color="#91cc75" stop-opacity="0.071"/><stop offset="0.90" stop-color="#91cc75" stop-opacity="0.015"/><stop offset="1.00" stop-color="#91cc75" stop-opacity="0.000"/></linearGradient>
<linearGradient id="cby" x1="0" y1="0" x2="0" y2="1"><stop offset="0.00" stop-color="#fac858" stop-opacity="0.750"/><stop offset="0.15" stop-color="#fac858" stop-opacity="0.569"/><stop offset="0.30" stop-color="#fac858" stop-opacity="0.409"/><stop offset="0.45" stop-color="#fac858" stop-opacity="0.271"/><stop offset="0.60" stop-color="#fac858" stop-opacity="0.158"/><stop offset="0.75" stop-color="#fac858" stop-opacity="0.071"/><stop offset="0.90" stop-color="#fac858" stop-opacity="0.015"/><stop offset="1.00" stop-color="#fac858" stop-opacity="0.000"/></linearGradient>
</defs>
<line x1="475" x2="943" y1="429.5" y2="429.5" stroke="#E0E6F1" stroke-width="1"/>
<line x1="475" x2="943" y1="383.5" y2="383.5" stroke="#E0E6F1" stroke-width="1"/>
<line x1="475" x2="943" y1="337.5" y2="337.5" stroke="#E0E6F1" stroke-width="1"/>
<line x1="475" x2="943" y1="475.5" y2="475.5" stroke="#6E7079" stroke-width="1"/>
<path d="M499.00,475.50 C499.00,475.50 522.38,475.50 545.77,475.50 C569.15,475.50 569.15,475.50 592.54,475.50 C615.92,475.50 619.85,475.50 639.31,475.50 C666.62,475.50 662.70,429.45 686.08,429.45 C709.47,429.45 705.54,475.50 732.85,475.50 C752.31,475.50 756.24,475.50 779.62,475.50 C803.00,475.50 803.01,475.50 826.39,475.50 C849.78,475.50 849.78,475.50 873.16,475.50 C896.55,475.50 919.93,475.50 919.93,475.50 L919.93,475.50 L499.00,475.50 Z" fill="url(#cbb)"/>
<path d="M499.00,337.35 C499.00,337.35 510.36,475.50 545.77,475.50 C557.13,475.50 573.08,475.50 592.54,475.50 C619.85,475.50 615.92,429.45 639.31,429.45 C662.69,429.45 662.70,475.50 686.08,475.50 C709.47,475.50 709.47,429.45 732.85,429.45 C756.24,429.45 752.31,475.50 779.62,475.50 C799.08,475.50 803.01,475.50 826.39,475.50 C849.78,475.50 849.78,475.50 873.16,475.50 C896.55,475.50 919.93,475.50 919.93,475.50 L919.93,475.50 L499.00,475.50 Z" fill="url(#cbg)"/>
<path d="M499.00,429.45 C499.00,429.45 518.46,475.50 545.77,475.50 C565.23,475.50 569.15,475.50 592.54,475.50 C615.92,475.50 615.92,475.50 639.31,475.50 C662.69,475.50 662.70,475.50 686.08,475.50 C709.46,475.50 713.39,475.50 732.85,475.50 C760.16,475.50 752.31,429.45 779.62,429.45 C799.08,429.45 806.93,429.45 826.39,429.45 C853.70,429.45 845.85,475.50 873.16,475.50 C892.62,475.50 919.93,475.50 919.93,475.50 L919.93,475.50 L499.00,475.50 Z" fill="url(#cby)"/>
<path d="M499.00,475.50 C499.00,475.50 522.38,475.50 545.77,475.50 C569.15,475.50 569.15,475.50 592.54,475.50 C615.92,475.50 619.85,475.50 639.31,475.50 C666.62,475.50 662.70,429.45 686.08,429.45 C709.47,429.45 705.54,475.50 732.85,475.50 C752.31,475.50 756.24,475.50 779.62,475.50 C803.00,475.50 803.01,475.50 826.39,475.50 C849.78,475.50 849.78,475.50 873.16,475.50 C896.55,475.50 919.93,475.50 919.93,475.50" fill="none" stroke="#5470c6" stroke-width="2"/>
<circle cx="499.00" cy="475.50" r="4" fill="#5470c6"/>
<circle cx="545.77" cy="475.50" r="4" fill="#5470c6"/>
<circle cx="592.54" cy="475.50" r="4" fill="#5470c6"/>
<circle cx="639.31" cy="475.50" r="4" fill="#5470c6"/>
<circle cx="686.08" cy="429.45" r="4" fill="#5470c6"/>
<circle cx="732.85" cy="475.50" r="4" fill="#5470c6"/>
<circle cx="779.62" cy="475.50" r="4" fill="#5470c6"/>
<circle cx="826.39" cy="475.50" r="4" fill="#5470c6"/>
<circle cx="873.16" cy="475.50" r="4" fill="#5470c6"/>
<circle cx="919.93" cy="475.50" r="4" fill="#5470c6"/>
<path d="M499.00,337.35 C499.00,337.35 510.36,475.50 545.77,475.50 C557.13,475.50 573.08,475.50 592.54,475.50 C619.85,475.50 615.92,429.45 639.31,429.45 C662.69,429.45 662.70,475.50 686.08,475.50 C709.47,475.50 709.47,429.45 732.85,429.45 C756.24,429.45 752.31,475.50 779.62,475.50 C799.08,475.50 803.01,475.50 826.39,475.50 C849.78,475.50 849.78,475.50 873.16,475.50 C896.55,475.50 919.93,475.50 919.93,475.50" fill="none" stroke="#91cc75" stroke-width="2"/>
<circle cx="499.00" cy="337.35" r="4" fill="#91cc75"/>
<circle cx="545.77" cy="475.50" r="4" fill="#91cc75"/>
<circle cx="592.54" cy="475.50" r="4" fill="#91cc75"/>
<circle cx="639.31" cy="429.45" r="4" fill="#91cc75"/>
<circle cx="686.08" cy="475.50" r="4" fill="#91cc75"/>
<circle cx="732.85" cy="429.45" r="4" fill="#91cc75"/>
<circle cx="779.62" cy="475.50" r="4" fill="#91cc75"/>
<circle cx="826.39" cy="475.50" r="4" fill="#91cc75"/>
<circle cx="873.16" cy="475.50" r="4" fill="#91cc75"/>
<circle cx="919.93" cy="475.50" r="4" fill="#91cc75"/>
<path d="M499.00,429.45 C499.00,429.45 518.46,475.50 545.77,475.50 C565.23,475.50 569.15,475.50 592.54,475.50 C615.92,475.50 615.92,475.50 639.31,475.50 C662.69,475.50 662.70,475.50 686.08,475.50 C709.46,475.50 713.39,475.50 732.85,475.50 C760.16,475.50 752.31,429.45 779.62,429.45 C799.08,429.45 806.93,429.45 826.39,429.45 C853.70,429.45 845.85,475.50 873.16,475.50 C892.62,475.50 919.93,475.50 919.93,475.50" fill="none" stroke="#fac858" stroke-width="2"/>
<circle cx="499.00" cy="429.45" r="4" fill="#fac858"/>
<circle cx="545.77" cy="475.50" r="4" fill="#fac858"/>
<circle cx="592.54" cy="475.50" r="4" fill="#fac858"/>
<circle cx="639.31" cy="475.50" r="4" fill="#fac858"/>
<circle cx="686.08" cy="475.50" r="4" fill="#fac858"/>
<circle cx="732.85" cy="475.50" r="4" fill="#fac858"/>
<circle cx="779.62" cy="429.45" r="4" fill="#fac858"/>
<circle cx="826.39" cy="429.45" r="4" fill="#fac858"/>
<circle cx="873.16" cy="475.50" r="4" fill="#fac858"/>
<circle cx="919.93" cy="475.50" r="4" fill="#fac858"/>
</svg>
<div class="t lg" style="left:647.500px;top:285.500px">视频</div>
<div class="t lg" style="left:712.500px;top:285.500px">文档</div>
<div class="t lg" style="left:777.500px;top:285.500px">综合</div>
<div class="t ax" style="left:455px;top:318.500px;letter-spacing:0">人数/个</div>
<div class="t ax c" style="left:464px;top:339.500px">3</div>
<div class="t ax c" style="left:464px;top:385.500px">2</div>
<div class="t ax c" style="left:464px;top:431.500px">1</div>
<div class="t ax c" style="left:464px;top:477.500px">0</div>
<div class="t ax c" style="left:499px;top:492px">0~10</div>
<div class="t ax c" style="left:592.500px;top:492px">20~30</div>
<div class="t ax c" style="left:686px;top:492px">40~50</div>
<div class="t ax c" style="left:779.500px;top:492px">60~70</div>
<div class="t ax c" style="left:873px;top:492px">80~90</div>
<div class="t ax" style="left:958px;top:470.500px;letter-spacing:.3px">成绩/分</div>

<!-- middle table -->
<div class="abs" style="left:402px;top:529px;width:337.500px;height:349px;border-radius:8px;background:#f7f7f8;border:1px solid #ebebf0;overflow:hidden" id="mt"></div>
<div class="t th" style="left:433.500px;top:541.500px">学号</div>
<div class="t th" style="left:547.500px;top:541.500px">姓名</div>
<div class="t th" style="left:659.500px;top:541.500px">风格</div>
<div class="hl" style="left:421.500px;top:568px;width:317.500px"></div>
<div class="t td" style="left:433.500px;top:582px">3</div><div class="t td" style="left:547.500px;top:582px">惠茗茗</div><div class="t td" style="left:659.500px;top:582px">文档</div>
<div class="hl" style="left:421.500px;top:608px;width:317.500px"></div>
<div class="t td" style="left:433.500px;top:622px">19</div><div class="t td" style="left:547.500px;top:622px">赵天乐</div><div class="t td" style="left:659.500px;top:622px">文档</div>
<div class="hl" style="left:421.500px;top:648px;width:317.500px"></div>
<div class="t td" style="left:433.500px;top:662px">20</div><div class="t td" style="left:547.500px;top:662px">王莉莉</div><div class="t td" style="left:659.500px;top:662px">综合</div>
<div class="hl" style="left:421.500px;top:688px;width:317.500px"></div>
<div class="t td" style="left:433.500px;top:702px">21</div><div class="t td" style="left:547.500px;top:702px">刘奇强</div><div class="t td" style="left:659.500px;top:702px">文档</div>
<div class="hl" style="left:421.500px;top:728px;width:317.500px"></div>
<div class="t td" style="left:433.500px;top:742px">47</div><div class="t td" style="left:547.500px;top:742px">刘伟</div><div class="t td" style="left:659.500px;top:742px">综合</div>
<div class="hl" style="left:421.500px;top:768px;width:317.500px"></div>
<div class="t td" style="left:433.500px;top:782px">52</div><div class="t td" style="left:547.500px;top:782px">刘灿烂</div><div class="t td" style="left:659.500px;top:782px">视频</div>
<div class="hl" style="left:421.500px;top:808px;width:317.500px"></div>
<div class="t td" style="left:433.500px;top:822px">53</div><div class="t td" style="left:547.500px;top:822px">袁柏林</div><div class="t td" style="left:659.500px;top:822px">文档</div>
<div class="hl" style="left:421.500px;top:848px;width:317.500px"></div>
<div class="t td" style="left:433.500px;top:862px">54</div><div class="t td" style="left:547.500px;top:862px">谢胜男</div><div class="t td" style="left:659.500px;top:862px">文档</div>

<!-- pie -->
<div class="t c" style="left:878px;top:545px;font-size:16px;color:#7a7a7a">学生风格占比</div>
<svg width="1458" height="913">
<path d="M878.00,696.30 L878.00,592.10 A104.20,104.20 0 0 1 944.98,616.48 Z" fill="#5470c6"/>
<path d="M878.00,696.30 L944.98,616.48 A104.20,104.20 0 1 1 787.76,748.40 Z" fill="#91cc75"/>
<path d="M878.00,696.30 L787.76,748.40 A104.20,104.20 0 0 1 878.00,592.10 Z" fill="#fac858"/>
 <rect x="986.500" y="534" width="25" height="14" rx="3" fill="#5470c6"/>
 <rect x="986.500" y="558.200" width="25" height="14" rx="3" fill="#91cc75"/>
 <rect x="986.500" y="582.300" width="25" height="14" rx="3" fill="#fac858"/>
 <text x="896.700" y="652" text-anchor="middle" font-size="18" font-weight="bold" fill="#e9ecf8" stroke="#5470c6" stroke-width="2" paint-order="stroke" stroke-linejoin="round" letter-spacing=".9" font-family="Liberation Sans,sans-serif">11.11%</text>
 <text x="913.200" y="746" text-anchor="middle" font-size="18" font-weight="bold" fill="#333" letter-spacing=".8" font-family="Liberation Sans,sans-serif">55.56%</text>
 <text x="830.500" y="676" text-anchor="middle" font-size="18" font-weight="bold" fill="#333" letter-spacing=".8" font-family="Liberation Sans,sans-serif">33.33%</text>
</svg>
<div class="t lg" style="left:957px;top:535px">视频</div>
<div class="t lg" style="left:957px;top:559px">文档</div>
<div class="t lg" style="left:957px;top:583px">综合</div>

<!-- right card -->
<div class="t" style="left:1064px;top:229px;font-size:18px;font-weight:bold;letter-spacing:2px;color:#444">课堂学生详情</div>
<div class="abs" style="left:1061.500px;top:257px;width:321.500px;height:1px;background:#e2e2ea"></div>
<div class="t th c" style="left:1091px;top:281px;font-weight:bold">学号</div>
<div class="t th c" style="left:1171px;top:281px;font-weight:bold">姓名</div>
<div class="t th c" style="left:1251px;top:281px;font-weight:bold">当前表现</div>
<div class="t th c" style="left:1331px;top:281px;font-weight:bold">预警级别</div>
<div class="hl" style="left:1051px;top:307px;width:342px"></div>
<div class="t td c" style="left:1091px;top:331px">20</div><div class="t td c" style="left:1171px;top:331px">王莉莉</div><div class="t td c" style="left:1251px;top:331px">D</div><div class="t td c" style="left:1331px;top:331px">轻度</div>
<div class="hl" style="left:1051px;top:367px;width:342px"></div>
<div class="t td c" style="left:1091px;top:391px">3</div><div class="t td c" style="left:1171px;top:391px">惠茗茗</div><div class="t td c" style="left:1251px;top:391px">D</div><div class="t td c" style="left:1331px;top:391px">正常</div>
<div class="hl" style="left:1051px;top:427px;width:342px"></div>
<div class="t td c" style="left:1091px;top:451px">21</div><div class="t td c" style="left:1171px;top:451px">刘奇强</div><div class="t td c" style="left:1251px;top:451px">D</div><div class="t td c" style="left:1331px;top:451px">中度</div>
<div class="hl" style="left:1051px;top:487px;width:342px"></div>
<div class="t td c" style="left:1091px;top:511px">54</div><div class="t td c" style="left:1171px;top:511px">谢胜男</div><div class="t td c" style="left:1251px;top:511px">C</div><div class="t td c" style="left:1331px;top:511px">轻度</div>
<div class="hl" style="left:1051px;top:547px;width:342px"></div>
<div class="t td c" style="left:1091px;top:571px">19</div><div class="t td c" style="left:1171px;top:571px">赵天乐</div><div class="t td c" style="left:1251px;top:571px">C</div><div class="t td c" style="left:1331px;top:571px">正常</div>
<div class="hl" style="left:1051px;top:607px;width:342px"></div>
<div class="t td c" style="left:1091px;top:631px">47</div><div class="t td c" style="left:1171px;top:631px">刘伟</div><div class="t td c" style="left:1251px;top:631px">B</div><div class="t td c" style="left:1331px;top:631px">正常</div>
<div class="hl" style="left:1051px;top:667px;width:342px"></div>
<div class="t td c" style="left:1091px;top:691px">52</div><div class="t td c" style="left:1171px;top:691px">刘灿烂</div><div class="t td c" style="left:1251px;top:691px">D</div><div class="t td c" style="left:1331px;top:691px">轻度</div>
<div class="hl" style="left:1051px;top:727px;width:342px"></div>
<div class="t td c" style="left:1091px;top:751px">53</div><div class="t td c" style="left:1171px;top:751px">袁柏林</div><div class="t td c" style="left:1251px;top:751px">C</div><div class="t td c" style="left:1331px;top:751px">轻度</div>
<div class="hl" style="left:1051px;top:787px;width:342px"></div>
<div class="t td c" style="left:1091px;top:811px">55</div><div class="t td c" style="left:1171px;top:811px">姜胡杨</div><div class="t td c" style="left:1251px;top:811px">D</div><div class="t td c" style="left:1331px;top:811px">中度</div>
<div class="hl" style="left:1051px;top:847px;width:342px"></div>
<div class="t td c" style="left:1091px;top:871px">2</div><div class="t td c" style="left:1171px;top:871px">李高盛</div><div class="t td c" style="left:1251px;top:871px">C</div><div class="t td c" style="left:1331px;top:871px">轻度</div>

<div id="win"></div>
</body>
</html>
